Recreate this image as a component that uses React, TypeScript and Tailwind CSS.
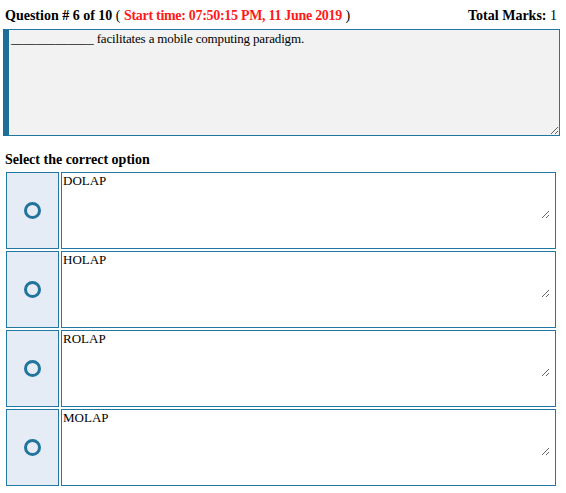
import React from "react";

const options = ["DOLAP", "HOLAP", "ROLAP", "MOLAP"];

const serif = { fontFamily: '"Liberation Serif", "Times New Roman", serif' };

const OptionRow = ({ label }: { label: string }) => {
  return (
    <div className="flex gap-[2px] h-[77px]">
      <div className="w-[53px] shrink-0 bg-[#e6ecf6] border border-[#2179a3] flex items-center justify-center">
        <div className="w-[17px] h-[17px] rounded-full border-[3.5px] border-[#21749c]" />
      </div>
      <div className="w-[495px] border border-[#2179a3] bg-white">
        <textarea
          readOnly
          value={label}
          className="block w-[488px] h-[46px] pl-[1px] pr-[2px] pt-0 text-[13px] leading-[15px] text-black bg-white outline-none"
          style={serif}
        />
      </div>
    </div>
  );
};

const App = () => {
  return (
    <div className="w-[566px] h-[493px] bg-white text-black" style={serif}>
      {/* header line */}
      <div className="flex justify-between px-[5px] pt-[8px] h-[29px] text-[14px] leading-[16px]">
        <div>
          <span className="font-bold">Question # 6 of 10</span>
          <span> ( </span>
          <span className="font-bold text-[#ff1a1a] tracking-[-0.3px]">Start time: 07:50:15 PM, 11 June 2019</span>
          <span> )</span>
        </div>
        <div className="pr-[4px]">
          <span className="font-bold">Total Marks:</span> 1
        </div>
      </div>

      {/* question text */}
      <div className="px-[3px]">
        <textarea
          readOnly
          value="_____________ facilitates a mobile computing paradigm."
          className="block w-[557px] h-[107px] border border-l-[6px] border-[#1f77a2] border-l-[#1d6f98] bg-[#f2f2f2] px-[2px] pt-[1px] text-[13px] leading-[15px] tracking-[-0.15px] text-black outline-none"
          style={serif}
        />
      </div>

      <div className="px-[5px] pt-[16px] pb-[4px] text-[14px] leading-[16px] font-bold">
        Select the correct option
      </div>

      <div className="flex flex-col gap-[2px] pl-[6px]">
        {options.map((o) => (
          <OptionRow key={o} label={o} />
        ))}
      </div>
    </div>
  );
};

export default App;
